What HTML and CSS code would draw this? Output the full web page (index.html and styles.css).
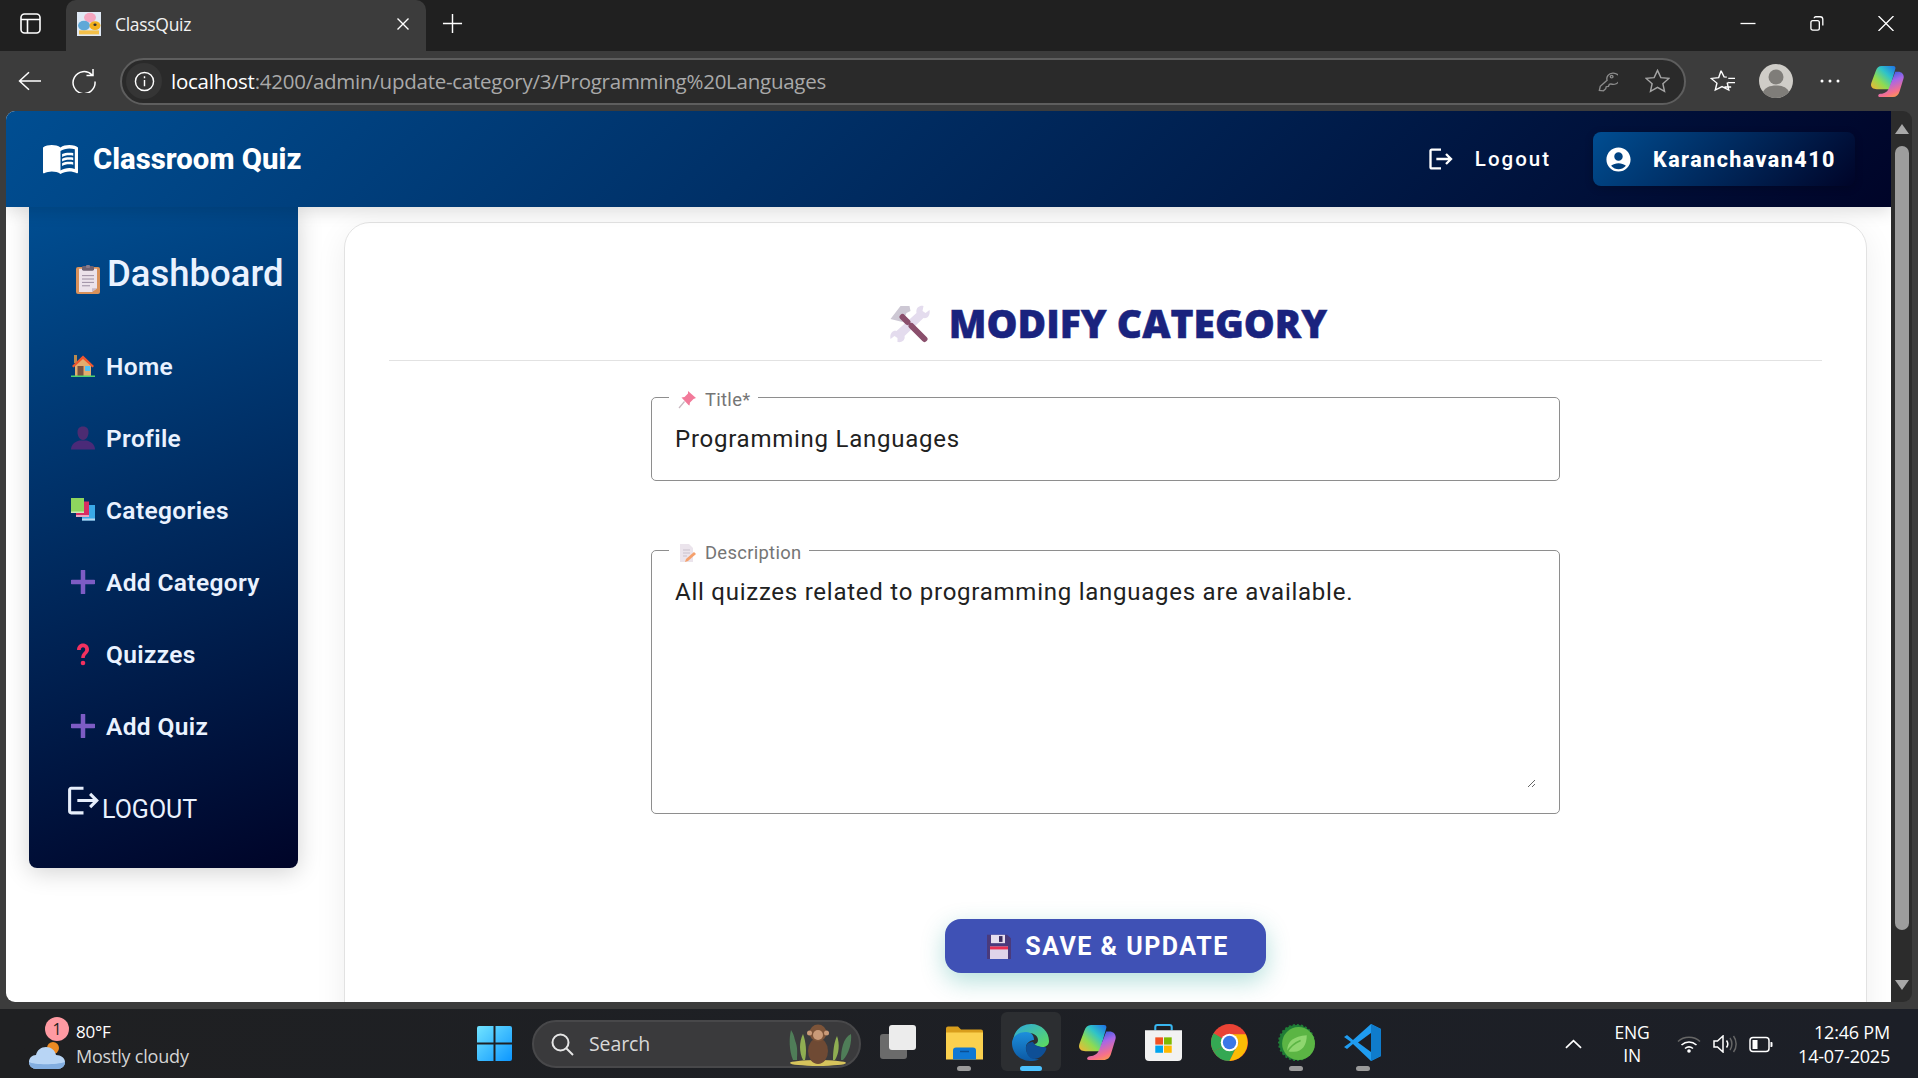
FILE: index.html
```html
<!DOCTYPE html>
<html lang="en">
<head>
<meta charset="utf-8">
<title>ClassQuiz</title>
<link rel="stylesheet" href="styles.css">
</head>
<body>
<header class="tabstrip">
  <svg class="tabs-toggle" viewBox="0 0 21 21" fill="none" stroke="#fff" stroke-width="1.6"><rect x="1" y="1" width="19" height="19" rx="3.5"/><path d="M1 6.5h19M7.5 6.5V20"/></svg>
  <div class="tab">
    <svg class="favicon" viewBox="0 0 24 30" preserveAspectRatio="none"><rect width="24" height="30" fill="#dfe9f5"/><circle cx="13" cy="7" r="6" fill="#f4a6c0"/><circle cx="7" cy="17" r="6" fill="#5fa8d8"/><circle cx="18" cy="17" r="5.5" fill="#f2b01e"/><circle cx="18" cy="16" r="1.6" fill="#333"/><rect x="2" y="23" width="20" height="5" fill="#f4c04a"/></svg>
    <span class="tab-title">ClassQuiz</span>
    <svg class="tab-close" viewBox="0 0 14 14" stroke="#fff" stroke-width="1.4"><path d="M1.5 1.5l11 11M12.500 1.500l-11 11"/></svg>
  </div>
  <svg class="tab-new" viewBox="0 0 22 22" stroke="#fff" stroke-width="1.5"><path d="M11 1v20M1 11h20"/></svg>
  <div class="win-controls">
    <svg class="win-icon" viewBox="0 0 16 16" stroke="#fff" stroke-width="1.4"><path d="M0 8h16"/></svg>
    <svg class="win-icon" viewBox="0 0 16 16" fill="none" stroke="#fff" stroke-width="1.4"><rect x="1.500" y="5" width="9" height="10" rx="2"/><path d="M5 2.500c0-1 .7-1.700 1.700-1.700h4.600c1.600 0 2.900 1.300 2.900 2.900v6.500"/></svg>
    <svg class="win-icon" viewBox="0 0 16 16" stroke="#fff" stroke-width="1.4"><path d="M0 0l16 16M16 0L0 16"/></svg>
  </div>
</header>

<nav class="toolbar">
  <svg class="tool-icon" viewBox="0 0 24 24" preserveAspectRatio="none" fill="none" stroke="#fff" stroke-width="1.500"><path d="M23 12H1.500M11 2.500L1.500 12l9.500 9.500"/></svg>
  <svg class="tool-icon reload" viewBox="0 0 24 24" fill="none" stroke="#fff" stroke-width="1.500"><path d="M20 6A11 11 0 1 0 23 12.500M21 0v6.500h-6.500"/></svg>
  <div class="address">
    <span class="info-chip"><svg class="info-icon" viewBox="0 0 22 22" fill="none" stroke="#fff" stroke-width="1.500"><circle cx="11" cy="11" r="9.500"/><path d="M11 9.500v6.500M11 5.500v2"/></svg></span>
    <span class="url"><span class="url-host">localhost</span>:4200/admin/update-category/3/Programming%20Languages</span>
    <svg class="addr-key" viewBox="0 0 22 26" preserveAspectRatio="none" fill="none" stroke="#8c8c8c" stroke-width="1.500"><path d="M1.500 24l1-5 7.500-7.500A7 7 0 1 1 14 16l-1.500.5-1 2.500-2.500.5-.5 2.500L6 24.500z"/><circle cx="15" cy="7" r="1.500"/></svg>
    <svg class="addr-star" viewBox="0 0 26 26" preserveAspectRatio="none" fill="none" stroke="#a5a5a5" stroke-width="1.500"><path d="M13 1.500l3.500 7.800 8.300.9-6.200 5.700 1.700 8.300-7.300-4.300-7.300 4.300 1.700-8.300-6.200-5.700 8.300-.9z"/></svg>
  </div>
  <svg class="fav-icon" viewBox="0 0 26 28" preserveAspectRatio="none" fill="none" stroke="#fff" stroke-width="1.500"><path d="M11.500 2l3.200 7.300 2.800.3M20 15.500l-2 1 1.500 8-7-4-7 4 1.700-8-6-5.500 7.800-1L11.500 2M19 11h7M19 16h7M15 21h7"/></svg>
  <svg class="avatar" viewBox="0 0 34 34"><circle cx="17" cy="17" r="17" fill="#cfcdc8"/><circle cx="17" cy="13" r="7.500" fill="#7f7d79"/><path d="M4 28c2-4.500 7-6.500 13-6.500s11 2 13 6.500c-3 4-8 6-13 6s-10-2-13-6z" fill="#7f7d79"/></svg>
  <svg class="dots" viewBox="0 0 20 4" fill="#fff"><circle cx="2" cy="2" r="1.500"/><circle cx="10" cy="2" r="1.500"/><circle cx="18" cy="2" r="1.500"/></svg>
  <svg class="copilot" viewBox="0 0 34 32" preserveAspectRatio="none"><defs><linearGradient id="cpa" x1="1" y1="0" x2="0" y2="1"><stop offset="0" stop-color="#1e6fe8"/><stop offset=".35" stop-color="#2fc4c8"/><stop offset=".65" stop-color="#8fdc50"/><stop offset="1" stop-color="#f9b233"/></linearGradient><linearGradient id="cpb" x1=".3" y1="0" x2=".7" y2="1"><stop offset="0" stop-color="#1a5fe0"/><stop offset=".4" stop-color="#a666e8"/><stop offset=".8" stop-color="#f7708a"/><stop offset="1" stop-color="#f99a50"/></linearGradient></defs><path d="M11 0h12c2 0 2.500 1.500 2 3L19 24H6c-5 0-7-3-5.500-7L5 5c1-3 3-5 6-5z" fill="url(#cpa)"/><path d="M25 6h3c4 0 6.500 3 5.500 7l-4 13c-1 4-3.500 6-7 6H9c-2 0-2-2-.5-3 4-.5 8-1 10-6z" fill="url(#cpb)"/></svg>
</nav>

<div class="viewport">
  <div class="page">
    <div class="navbar">
      <svg class="brand-icon" viewBox="1 4.500 22 17" preserveAspectRatio="none" fill="#fff"><path d="M21 5c-1.110-.35-2.330-.5-3.500-.5-1.950 0-4.050.4-5.500 1.500-1.450-1.100-3.550-1.500-5.500-1.500S2.450 4.900 1 6v14.650c0 .25.25.5.5.5.1 0 .15-.05.25-.05C3.100 20.450 5.050 20 6.500 20c1.950 0 4.050.4 5.500 1.500 1.350-.85 3.800-1.500 5.500-1.500 1.650 0 3.350.3 4.750 1.050.1.05.15.05.25.05.25 0 .5-.25.5-.5V6c-.6-.45-1.250-.75-2-1zm0 13.500c-1.100-.35-2.300-.5-3.500-.5-1.700 0-4.150.65-5.500 1.500V8c1.350-.85 3.800-1.500 5.500-1.500 1.200 0 2.400.15 3.500.5v11.500z"/><path d="M17.500 10.500c.88 0 1.730.09 2.500.26V9.240c-.79-.15-1.640-.24-2.500-.24-1.700 0-3.240.29-4.500.83v1.660c1.130-.64 2.700-.99 4.500-.99zM13 12.490v1.660c1.130-.64 2.700-.99 4.500-.99.88 0 1.730.09 2.500.26V11.900c-.79-.15-1.640-.24-2.500-.24-1.700 0-3.240.3-4.500.83zM17.500 14.330c-1.700 0-3.240.29-4.500.83v1.660c1.130-.64 2.700-.99 4.500-.99.88 0 1.730.09 2.500.26v-1.520c-.79-.16-1.640-.24-2.500-.24z"/></svg>
      <span class="brand">Classroom Quiz</span>
      <a class="nav-logout">
        <svg class="nav-logout-icon" viewBox="0 0 24 24" fill="#fff"><path d="M17 7l-1.410 1.410L18.170 11H8v2h10.170l-2.580 2.580L17 17l5-5zM4 5h8V3H4c-1.100 0-2 .9-2 2v14c0 1.100.9 2 2 2h8v-2H4V5z"/></svg>
        <span>Logout</span>
      </a>
      <a class="user-pill">
        <svg class="user-icon" viewBox="0 0 24 24" fill="#fff"><path d="M12 2C6.480 2 2 6.480 2 12s4.480 10 10 10 10-4.480 10-10S17.520 2 12 2zm0 4c1.930 0 3.500 1.570 3.500 3.500S13.930 13 12 13s-3.500-1.570-3.500-3.500S10.070 6 12 6zm0 14c-2.030 0-4.430-.82-6.140-2.880C7.550 15.800 9.680 15 12 15s4.450.8 6.140 2.120C16.430 19.180 14.030 20 12 20z"/></svg>
        <span>Karanchavan410</span>
      </a>
    </div>

    <div class="content">
      <aside class="sidebar">
        <h2 class="side-title">
          <svg class="side-title-icon" viewBox="0 0 24 30" preserveAspectRatio="none"><rect y="2" width="24" height="28" rx="2" fill="#d9915a"/><path d="M3 4h18v20l-5 4H3z" fill="#ece2ea"/><path d="M16 28l5-4h-5z" fill="#c9b8c6"/><path d="M6 11h12M6 14.500h12M6 18h12M6 21.500h8" stroke="#9a8ca0" stroke-width="1"/><rect x="6" y="1" width="12" height="5" rx="1.500" fill="#6f6272"/><rect x="10" y="0" width="4" height="3" rx="1" fill="#8a7c8c"/></svg>
          <span>Dashboard</span>
        </h2>
        <ul class="side-list">
          <li class="side-item"><svg class="side-icon" viewBox="0 0 24 24"><rect x="3" y="1" width="3" height="8" fill="#b98a4e"/><path d="M4 10L12 3l8 7v12H4z" fill="#e2ad6f"/><path d="M1 12L12 1.500 23 12l-1.500 1.500L12 5 2.500 13.500z" fill="#f0562e"/><rect x="6.500" y="12" width="6" height="10" fill="#7a5140"/><rect x="14" y="12" width="5" height="5" fill="#4fc0f5"/><rect x="0" y="21.500" width="24" height="1.500" fill="#4fd16f"/></svg><span>Home</span></li>
          <li class="side-item"><svg class="side-icon" viewBox="0 0 24 24"><path d="M6.500 6c0-4 2.500-5.500 5.500-5.500s5.500 1.500 5.500 5.500-2 8-5.500 8-5.500-4-5.500-8z" fill="#4c2c72"/><path d="M0 23.500c0-5 4-8 8.500-9h7c4.500 1 8.500 4 8.500 9z" fill="#4a2a78"/></svg><span>Profile</span></li>
          <li class="side-item"><svg class="side-icon" viewBox="0 0 24 24"><rect x="11" y="7" width="13" height="15.500" fill="#3aa9e8"/><rect x="11" y="20.500" width="13" height="2" fill="#b8d8f0"/><rect x="5" y="3.500" width="13" height="15.500" fill="#d92c63"/><rect x="5" y="17" width="13" height="2" fill="#e8a8c0"/><rect x="0" y="0" width="13" height="15" fill="#8ed55e"/><rect x="0" y="13.500" width="13" height="1.500" fill="#cfeab8"/></svg><span>Categories</span></li>
          <li class="side-item"><svg class="side-icon" viewBox="0 0 24 24"><path d="M12 1v22M1 12h22" stroke="#7d5cc4" stroke-width="4.500" stroke-linecap="round"/></svg><span>Add Category</span></li>
          <li class="side-item"><svg class="side-icon" viewBox="0 0 24 24"><path d="M6 8c0-4 2.700-6.500 6-6.500S18 3.700 18 7.500c0 4.200-4.200 4.700-4.200 8.500h-3.600c0-5.300 4-5.600 4-8.500 0-1.300-1-2.200-2.200-2.200S9.800 6.300 9.800 8z" fill="#f2315f"/><circle cx="12" cy="21" r="2.300" fill="#f2315f"/></svg><span>Quizzes</span></li>
          <li class="side-item"><svg class="side-icon" viewBox="0 0 24 24"><path d="M12 1v22M1 12h22" stroke="#7d5cc4" stroke-width="4.500" stroke-linecap="round"/></svg><span>Add Quiz</span></li>
          <li class="side-logout"><svg class="side-logout-icon" viewBox="0 0 24 24" fill="#e6eefb"><path d="M17 7l-1.410 1.410L18.170 11H8v2h10.170l-2.580 2.580L17 17l5-5zM4 5h8V3H4c-1.100 0-2 .9-2 2v14c0 1.100.9 2 2 2h8v-2H4V5z"/></svg><span>LOGOUT</span></li>
        </ul>
      </aside>

      <main class="card">
        <h1 class="card-title">
          <svg class="card-title-icon" viewBox="0 0 40 38"><path d="M0 14L10 1l9 0 1 5-4 2-4 9z" fill="#cdc8d4"/><path d="M33 1c-4-1-8 2-7 7L6 26c-4-1-7 3-6 8l4-3 3 2 0 4c5 1 8-3 7-6l19-18c4 1 7-3 6-8l-4 3-3-2z" fill="#e4dcee"/><path d="M12 12l5 5M21 21l13 13" stroke="#8a4f6c" stroke-width="6" stroke-linecap="round"/></svg>
          <span>MODIFY CATEGORY</span>
        </h1>
        <form class="form">
          <fieldset class="field">
            <legend class="field-label">
              <svg class="label-icon" viewBox="0 0 18 18"><path d="M1 17l5.500-6.500" stroke="#c8b8c0" stroke-width="1.200"/><path d="M10 0l8 7-2.500 1-3.500 3.500-.5 3-1-.5L3.500 6.500l3-.5L10 2.500z" fill="#f27a9a"/></svg>
              <span>Title*</span>
            </legend>
            <div class="field-value">Programming Languages</div>
          </fieldset>
          <fieldset class="field field-area">
            <legend class="field-label">
              <svg class="label-icon" viewBox="0 0 18 18"><path d="M2 0h9l4 4v14H2z" fill="#ebe4ec"/><path d="M5 6h7M5 9h7M5 12h4" stroke="#c9c0cc"/><path d="M8 15l8-7 2 2-8 7-3 1z" fill="#f5a06c"/></svg>
              <span>Description</span>
            </legend>
            <div class="field-text">All quizzes related to programming languages are available.</div>
          </fieldset>
          <button class="save-btn" type="button">
            <svg class="save-icon" viewBox="0 0 24 30" preserveAspectRatio="none"><path d="M0 1h20l4 4v25H0z" fill="#4a3a7c"/><rect x="4" y="1" width="14" height="10" fill="#e6deee"/><rect x="12" y="2.500" width="3.500" height="7" fill="#3a2c60"/><rect x="3" y="15" width="18" height="15" fill="#e0d4ea"/><rect x="3" y="15" width="18" height="3.500" fill="#ea2f52"/></svg>
            <span>SAVE &amp; UPDATE</span>
          </button>
        </form>
      </main>
    </div>
  </div>
  <div class="scrollbar">
    <svg class="scroll-arrow" viewBox="0 0 14 10" fill="#a8a8a8"><path d="M7 0l7 10H0z"/></svg>
    <div class="scroll-thumb"></div>
    <svg class="scroll-arrow" viewBox="0 0 14 10" fill="#a8a8a8"><path d="M7 10L0 0h14z"/></svg>
  </div>
</div>

<footer class="taskbar">
  <div class="weather">
    <div class="weather-icon">
      <svg class="cloud" viewBox="0 0 36 36"><circle cx="24" cy="14" r="6" fill="#ee8a22"/><path d="M8 35c-5 0-8-3-8-7s3-7 7-7c1-5 5-8 10-8s9 3 10 8c5 0 9 3 9 7s-3 7-8 7z" fill="#b8d5f5"/><path d="M8 35c-5 0-8-3-8-7 5 3 28 3 36 0 0 4-3 7-8 7z" fill="#83aee0"/></svg>
      <span class="badge">1</span>
    </div>
    <div class="weather-text">
      <span class="weather-temp">80°F</span>
      <span class="weather-desc">Mostly cloudy</span>
    </div>
  </div>
  <svg class="start" viewBox="0 0 35 35"><defs><linearGradient id="wa" x1="0" y1="0" x2="1" y2="1"><stop offset="0" stop-color="#72e4ff"/><stop offset="1" stop-color="#0c96ff"/></linearGradient></defs><path d="M0 2a2 2 0 0 1 2-2h14.500v16.500H0zM18.500 0H33a2 2 0 0 1 2 2v14.500H18.500zM0 18.500h16.500V35H2a2 2 0 0 1-2-2zM18.500 18.500H35V33a2 2 0 0 1-2 2H18.500z" fill="url(#wa)"/></svg>
  <div class="search">
    <svg class="search-icon" viewBox="0 0 24 24" fill="none" stroke="#e6e6e6" stroke-width="2"><circle cx="10.500" cy="10.500" r="8"/><path d="M16.500 16.500L23 23"/></svg>
    <span class="search-text">Search</span>
    <svg class="monkey" viewBox="0 0 70 44"><ellipse cx="35" cy="41" rx="28" ry="3" fill="#d6c35c"/><path d="M10 38C6 28 6 16 8 8c3 5 3 6 4 10s3 5 2 20zM58 38c0-10 2-22 10-26 1 8-2 20-8 26z" fill="#4f7d58"/><path d="M20 38C16 30 16 20 20 12c3 8 4 18 2 26zM50 38c0-8 1-18 4-24 3 8 2 18-2 24z" fill="#8fae52"/><ellipse cx="35" cy="29" rx="10" ry="13" fill="#6f4a34"/><circle cx="35" cy="11" r="8.500" fill="#7d5439"/><ellipse cx="35" cy="13" rx="5" ry="5" fill="#c99a78"/><circle cx="26.500" cy="11" r="2.500" fill="#c99a78"/><circle cx="43.500" cy="11" r="2.500" fill="#c99a78"/></svg>
  </div>
  <div class="task-apps">
    <div class="task-app">
      <svg class="app-icon" viewBox="0 0 37 37"><rect x="0" y="10" width="27" height="25" rx="3" fill="#6b6b6b"/><rect x="9" y="1" width="27" height="25" rx="3" fill="#ececec"/></svg>
    </div>
    <div class="task-app">
      <svg class="app-icon" viewBox="0 0 37 34"><path d="M0 3a2 2 0 0 1 2-2h10l3 3h20a2 2 0 0 1 2 2v4H0z" fill="#d99e1c"/><path d="M0 7h37v27H0z" fill="#fbd14f"/><path d="M7 34v-9a3 3 0 0 1 3-3h17a3 3 0 0 1 3 3v9z" fill="#0f78d4"/><path d="M14 26h9" stroke="#0a4f94" stroke-width="1.500"/></svg>
      <span class="dot"></span>
    </div>
    <div class="task-app is-active">
      <svg class="app-icon" viewBox="0 0 37 37"><defs><linearGradient id="ea" x1="0" y1="0" x2="1" y2="1"><stop offset="0" stop-color="#2ca7e0"/><stop offset="1" stop-color="#5ede5a"/></linearGradient><linearGradient id="eb" x1="0" y1="0" x2="0" y2="1"><stop offset="0" stop-color="#1d8fdc"/><stop offset="1" stop-color="#0c59a4"/></linearGradient></defs><path d="M1 17C2 6 10 0 19 0c11 0 18 8 18 17 0 4-3 6-7 6-3 0-7-1-8-3 3 0 4-2 4-4 0-4-4-7-9-7-7 0-15 2-16 8z" fill="url(#ea)"/><path d="M0 19c0-7 7-11 14-11 6 0 8 4 8 8-3 0-9 3-8 9s5 11 13 10c-3 2-6 2-9 2C8 37 0 29 0 19z" fill="url(#eb)"/><path d="M14 24c0-4 3-6 7-6 1 3 6 5 11 5 2 0 3 1 2 3-2 5-7 9-12 9-5 0-8-6-8-11z" fill="#0e4f96"/></svg>
      <span class="dot dot-active"></span>
    </div>
    <div class="task-app">
      <svg class="app-icon" viewBox="0 0 34 32"><defs><linearGradient id="cqa" x1="1" y1="0" x2="0" y2="1"><stop offset="0" stop-color="#1e6fe8"/><stop offset=".35" stop-color="#2fc4c8"/><stop offset=".65" stop-color="#8fdc50"/><stop offset="1" stop-color="#f9b233"/></linearGradient><linearGradient id="cqb" x1=".3" y1="0" x2=".7" y2="1"><stop offset="0" stop-color="#1a5fe0"/><stop offset=".4" stop-color="#a666e8"/><stop offset=".8" stop-color="#f7708a"/><stop offset="1" stop-color="#f99a50"/></linearGradient></defs><path d="M11 0h12c2 0 2.500 1.500 2 3L19 24H6c-5 0-7-3-5.500-7L5 5c1-3 3-5 6-5z" fill="url(#cqa)"/><path d="M25 6h3c4 0 6.500 3 5.500 7l-4 13c-1 4-3.500 6-7 6H9c-2 0-2-2-.5-3 4-.5 8-1 10-6z" fill="url(#cqb)"/></svg>
    </div>
    <div class="task-app">
      <svg class="app-icon" viewBox="0 0 36 36"><path d="M10 6V3a2 2 0 0 1 2-2h12a2 2 0 0 1 2 2v3" fill="none" stroke="#38b6f0" stroke-width="2"/><path d="M0 6h36v26a4 4 0 0 1-4 4H4a4 4 0 0 1-4-4z" fill="#f2f2f2"/><rect x="10" y="13" width="7.500" height="7" fill="#f25022"/><rect x="18.500" y="13" width="7.500" height="7" fill="#7fba00"/><rect x="10" y="21" width="7.500" height="7" fill="#00a4ef"/><rect x="18.500" y="21" width="7.500" height="7" fill="#ffb900"/></svg>
    </div>
    <div class="task-app">
      <svg class="app-icon" viewBox="0 0 36 36"><circle cx="18" cy="18" r="18" fill="#ea4335"/><path d="M18 18L2.500 27A18 18 0 0 1 2.500 9z" fill="#34a853"/><path d="M2.500 27A18 18 0 0 0 18 36L27 18H18z" fill="#34a853"/><path d="M18 10h15.700A18 18 0 0 1 18 36l9-18z" fill="#fbbc05"/><circle cx="18" cy="18" r="8.500" fill="#fff"/><circle cx="18" cy="18" r="6.500" fill="#3b78e7"/></svg>
    </div>
    <div class="task-app">
      <svg class="app-icon" viewBox="0 0 36 36"><circle cx="18" cy="18" r="17" fill="#1f7d36" stroke="#1f7d36" stroke-width="2" stroke-dasharray="2 2"/><circle cx="20" cy="19" r="16" fill="#5bb544"/><path d="M9 26c0-9 6-14 19-15 0 10-5 17-14 16-2 0-3 0-5-1z" fill="#8ed66f"/><path d="M9 27c3-5 8-9 13-11" stroke="#5bb544" stroke-width="1.500" fill="none"/></svg>
      <span class="dot"></span>
    </div>
    <div class="task-app">
      <svg class="app-icon" viewBox="0 0 37 37"><path d="M27 0l10 5v27l-10 5L9 20l-6 5-3-2 7-5-7-5 3-2 6 5z" fill="#1f9cf0"/><path d="M27 9L14 18.500 27 28z" fill="#1c1e24"/><path d="M27 0l10 5v27l-10 5z" fill="#0f7ccc"/></svg>
      <span class="dot"></span>
    </div>
  </div>
  <div class="tray">
    <svg class="tray-chevron" viewBox="0 0 18 10" fill="none" stroke="#fff" stroke-width="1.800"><path d="M1 9l8-7.500L17 9"/></svg>
    <div class="lang"><span>ENG</span><span>IN</span></div>
    <svg class="tray-icon" viewBox="0 0 24 18" fill="none" stroke-width="1.600"><path d="M1 6.500C7 .8 17 .8 23 6.500" stroke="#666"/><path d="M4.500 10c4.500-4 10.500-4 15 0M8 13.500c2.500-2 5.500-2 8 0" stroke="#fff"/><circle cx="12" cy="16" r="1.800" fill="#fff"/></svg>
    <svg class="tray-icon" viewBox="0 0 24 18" fill="none" stroke-width="1.500"><path d="M1 6h3.500L10 1v16l-5.500-5H1z" stroke="#fff"/><path d="M13.500 5.500c1.500 2 1.500 5 0 7" stroke="#fff"/><path d="M17 3c2.500 3.500 2.500 8.500 0 12M20.500 1c3.500 4.500 3.500 11.500 0 16" stroke="#666"/></svg>
    <svg class="tray-icon" viewBox="0 0 24 18" fill="none"><rect x="1" y="2.500" width="19" height="14" rx="3" stroke="#fff" stroke-width="1.500"/><rect x="3.500" y="5" width="5" height="9" fill="#fff"/><path d="M21.500 7h1a1 1 0 0 1 1 1v3a1 1 0 0 1-1 1h-1z" fill="#fff"/></svg>
    <div class="clock"><span>12:46 PM</span><span>14-07-2025</span></div>
  </div>
</footer>
</body>
</html>
```

FILE: styles.css
```css
* { box-sizing: border-box; }
html, body { margin: 0; padding: 0; }
body {
  width: 1918px;
  height: 1078px;
  overflow: hidden;
  background: #3c3c3c;
  display: flex;
  flex-direction: column;
  font-family: Roboto, "Liberation Sans", sans-serif;
}
svg { display: block; flex: none; }

/* browser tab strip */
.tabstrip { height: 51px; padding-bottom: 4px; background: #202020; display: flex; align-items: center; flex: none; }
.tabs-toggle { width: 21px; height: 21px; margin-left: 20px; }
.tab {
  width: 360px; height: 51px; margin: 0 0 -4px 25px; padding: 0 14px 4px 11px;
  background: #3c3c3c; border-radius: 10px 10px 0 0;
  display: flex; align-items: center;
}
.favicon { width: 24px; height: 24px; }
.tab-title { margin-left: 14px; color: #f2f2f2; font: 17.500px "Open Sans", sans-serif; letter-spacing: -.3px; }
.tab-close { width: 14px; height: 14px; margin-left: auto; margin-right: 2px; }
.tab-new { width: 21px; height: 21px; margin-left: 16px; }
.win-controls { margin-left: auto; display: flex; gap: 53px; padding-right: 24px; }
.win-icon { width: 16px; height: 15px; }

/* browser toolbar */
.toolbar { height: 60px; display: flex; align-items: center; flex: none; }
.tool-icon { width: 24px; height: 22px; margin-left: 18px; }
.reload { height: 24px; margin-left: 30px; }
.address {
  width: 1566px; height: 47px; margin-left: 24px;
  background: #2a2a2a; border: 2px solid #5e5e5e; border-radius: 24px;
  display: flex; align-items: center;
}
.info-chip { width: 36px; height: 36px; margin-left: 4px; border-radius: 50%; background: #353535; display: flex; align-items: center; justify-content: center; }
.info-icon { width: 21px; height: 21px; }
.url { margin-left: 9px; color: #a9a9a9; font: 20.500px "Open Sans", sans-serif; letter-spacing: -.25px; white-space: nowrap; }
.url-host { color: #fff; }
.addr-key { width: 20px; height: 21px; margin-left: auto; }
.addr-star { width: 25px; height: 24px; margin: 0 14px 0 27px; }
.fav-icon { width: 25px; height: 24px; margin-left: 24px; }
.avatar { width: 34px; height: 34px; margin-left: 24px; }
.dots { width: 20px; height: 4px; margin-left: 27px; }
.copilot { width: 33px; height: 31px; margin-left: 31px; }

/* viewport */
.viewport { height: 891px; flex: none; display: flex; padding-left: 6px; }
.page { width: 1885px; height: 891px; background: #fff; border-radius: 9px 0 0 9px; overflow: hidden; display: flex; flex-direction: column; }
.scrollbar { width: 21px; background: #2c2c2c; border-radius: 0 9px 9px 0; display: flex; flex-direction: column; align-items: center; padding: 13px 0 12px; }
.scroll-arrow { width: 14px; height: 10px; }
.scroll-thumb { width: 14px; height: 784px; margin: 12px 0 auto; background: #9d9d9d; border-radius: 7px; }

.navbar {
  height: 96px; flex: none; display: flex; align-items: center; padding: 0 36px 0 37px;
  background: linear-gradient(135deg, #004e92 0%, #000428 100%);
  box-shadow: 0 4px 16px rgba(0,0,0,.14); position: relative; z-index: 2;
  color: #fff;
}
.brand-icon { width: 35px; height: 29px; }
.brand { margin-left: 15px; font-size: 29.300px; font-weight: 800; }
.nav-logout { margin-left: auto; display: flex; align-items: center; font-size: 20.500px; font-weight: 500; letter-spacing: 2px; }
.nav-logout-icon { width: 28px; height: 28px; margin-right: 20px; }
.user-pill {
  width: 262px; height: 54px; margin-left: 42px; padding-left: 11px;
  display: flex; align-items: center; border-radius: 8px;
  background: linear-gradient(135deg, #004e92 0%, #000428 100%);
  box-shadow: 0 2px 8px rgba(0,0,0,.2);
  font-size: 21.500px; font-weight: 800; letter-spacing: 1.450px;
}
.user-icon { width: 29px; height: 29px; margin-right: 20px; }

/* content */
.content { flex: 1; display: flex; align-items: flex-start; min-height: 0; }
.sidebar {
  width: 269px; height: 661px; margin-left: 23px; flex: none;
  background: linear-gradient(160deg, #004e92 0%, #000428 100%);
  border-radius: 0 0 8px 8px;
  box-shadow: 0 4px 24px rgba(0,0,0,.18);
  color: #eaf2ff;
}
.side-title { margin: 0; padding: 45px 0 34px 47px; height: 123px; display: flex; align-items: center; font-size: 36.500px; line-height: 44px; font-weight: 500; }
.side-title-icon { width: 24px; height: 29px; margin: 10px 7px 0 0; }
.side-list { list-style: none; margin: 0; padding: 0; }
.side-item { height: 72px; padding-left: 42px; display: flex; align-items: center; gap: 11px; font-size: 24.500px; font-weight: 600; letter-spacing: .35px; }
.side-icon { width: 24px; height: 24px; }
.side-logout { height: 72px; padding: 20px 0 0 36px; display: flex; align-items: flex-start; font-size: 25px; }
.side-logout-icon { width: 37px; height: 37px; }
.side-logout span { margin-top: 13px; }

.card {
  width: 1523px; height: 900px; margin: 15px 0 0 46px; flex: none;
  background: #fff; border: 1px solid #e2e2e2; border-radius: 26px;
  box-shadow: 0 8px 32px rgba(0,0,0,.07);
  padding: 0 44px;
}
.card-title {
  margin: 0; height: 138px; padding: 77px 0 0 6px;
  border-bottom: 1px solid #e2e2e2;
  display: flex; justify-content: center; align-items: flex-start; gap: 18px;
  color: #1a237e; font: 800 39px/46px "Open Sans", sans-serif;
  -webkit-text-stroke: .5px #1a237e;
}
.card-title-icon { width: 41px; height: 38px; margin-top: 5px; }
.form { display: flex; flex-direction: column; align-items: center; }
.field {
  width: 909px; height: 92px; margin: 28px 0 0; padding: 0 23px;
  border: 1px solid #8e8e8e; border-radius: 5px; min-width: 0;
}
.field-label {
  margin-left: -6px; padding: 4px 8px 0 9px; height: 17px;
  display: flex; align-items: center; gap: 9px;
  color: #757575; font-size: 18.400px; letter-spacing: .3px; line-height: 18px;
}
.label-icon { width: 18px; height: 18px; }
.field-value { padding-top: 18px; color: #212121; font-size: 24px; line-height: 30px; letter-spacing: .75px; }
.field-area { height: 272px; margin-top: 61px; }
.field-text {
  height: 211px; margin-top: 18px; overflow: auto; resize: both;
  color: #212121; font-size: 24px; line-height: 30px; letter-spacing: .75px;
}
.save-btn {
  width: 321px; height: 54px; margin-top: 105px; padding: 0 0 0 5px; border: 0; border-radius: 16px;
  background: #3f51b5; color: #fff;
  display: flex; align-items: center; justify-content: center; gap: 14px;
  box-shadow: 0 8px 24px rgba(0,150,136,.3);
  font: 700 25px Roboto, sans-serif; letter-spacing: 1.500px;
}
.save-icon { width: 24px; height: 25px; }

/* taskbar */
.taskbar {
  height: 69px; margin-top: 7px; flex: none; display: flex; align-items: center;
  background: linear-gradient(90deg, #1f2022, #1c1f27);
  color: #fff;
  font-family: "Open Sans", sans-serif;
}
.weather { width: 477px; padding-left: 29px; display: flex; align-items: center; gap: 11px; flex: none; }
.weather-icon { position: relative; width: 36px; height: 36px; margin-top: 16px; }
.cloud { width: 36px; height: 36px; }
.badge { position: absolute; left: 16px; top: -17px; width: 24px; height: 24px; border-radius: 50%; background: #ff9aa2; color: #222; font-size: 16px; line-height: 24px; text-align: center; }
.weather-text { display: flex; flex-direction: column; line-height: 24px; letter-spacing: -.2px; }
.weather-temp { font-size: 17px; }
.weather-desc { color: #d4d4d4; font-size: 18px; }
.start { width: 35px; height: 35px; }
.search {
  width: 329px; height: 48px; margin-left: 20px; padding: 0 6px 0 16px;
  background: #3a3a3c; border: 2px solid #48484a; border-radius: 24px;
  display: flex; align-items: center;
}
.search-icon { width: 24px; height: 24px; }
.search-text { margin-left: 15px; color: #d8d8d8; font-size: 19.500px; letter-spacing: -.1px; }
.monkey { width: 70px; height: 44px; margin-left: auto; }
.task-apps { margin-left: 7px; display: flex; gap: 6.400px; height: 59px; margin-top: -5px; }
.task-app { width: 60px; height: 59px; padding: 12px 0 0; display: flex; flex-direction: column; align-items: center; border-radius: 6px; }
.is-active { background: #2c2e31; }
.app-icon { width: 37px; height: 37px; }
.dot { width: 14px; height: 5px; margin-top: auto; border-radius: 3px; background: #9a9a9a; }
.dot-active { width: 22px; background: #4cc2ff; }
.tray { margin-left: auto; padding-right: 28px; display: flex; align-items: center; }
.tray-chevron { width: 17px; height: 10px; }
.lang { width: 60px; margin-left: 20px; display: flex; flex-direction: column; align-items: center; font-size: 17.500px; line-height: 23px; letter-spacing: -.2px; }
.tray-icon { width: 24px; height: 18px; margin-left: 12px; }
.lang + .tray-icon { margin-left: 15px; }
.clock { margin-left: 25px; display: flex; flex-direction: column; align-items: flex-end; font-size: 18px; line-height: 24px; letter-spacing: -.2px; }
```
